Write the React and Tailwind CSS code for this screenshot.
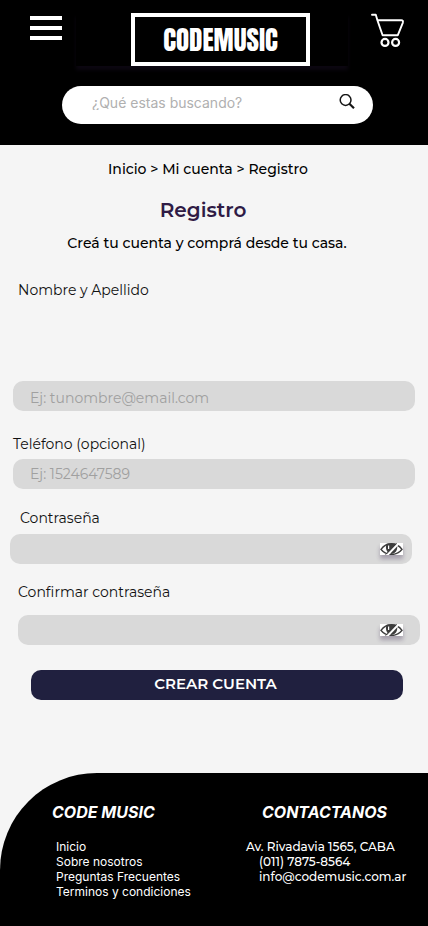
import React from "react";

const field =
  "block h-[30px] w-full rounded-[10px] bg-[#d9d9d9] pl-[17px] pr-12 text-[14px] text-black outline-none placeholder:text-[#a0a0a0]";
const label = "block text-[14px] leading-5 text-[#111111]";

function CartIcon() {
  return (
    <svg viewBox="0 0 34 34" className="h-[34px] w-[34px]" fill="none" stroke="white" strokeWidth="1.9" strokeLinecap="round" strokeLinejoin="round">
      <path d="M1 1.800h3.800l1.600 5.400L11.600 22.200h15.200L31.800 9.800Q32.600 7.200 30.200 7.200H6.400" />
      <circle cx="14" cy="29.400" r="3.500" strokeWidth="2.200" />
      <circle cx="24.600" cy="29.400" r="3.500" strokeWidth="2.200" />
    </svg>
  );
}

function SearchIcon() {
  return (
    <svg viewBox="0 0 16 16" className="h-4 w-4" fill="none" stroke="#151515">
      <circle cx="6.6" cy="6" r="5.4" strokeWidth="1.5" />
      <path d="M10.4 9.800L15 14.200" strokeWidth="2.2" />
    </svg>
  );
}

function EyeOffIcon() {
  return (
    <svg viewBox="0 0 23 12" className="h-3 w-[23px]">
      <rect width="23" height="12" fill="white" />
      <path d="M1 6.400C4.600 1.400 8 .8 11.500 .8s7 .8 10.500 5.600C18.600 10.600 15 11.400 11.500 11.400S4.400 10.600 1 6.400Z" fill="white" stroke="#3d3d3d" strokeWidth="1.500" />
      <path d="M6.600 .8H16.600Q18.200 5 16 8.600Q14.400 11 11.500 11Q8.600 11 7.200 8.600Q5 5 6.600 .8Z" fill="#3d3d3d" />
      <path d="M8.600 2.600V6" stroke="white" strokeWidth="1.200" />
      <path d="M7 12.500L18.500 .5" stroke="white" strokeWidth="2" />
      <path d="M5.600 11.600L16.600 .4" stroke="#3d3d3d" strokeWidth="1" />
    </svg>
  );
}

function PasswordField({ id }) {
  return (
    <div className="relative">
      <input id={id} type="password" className={field} />
      <button
        type="button"
        aria-label="Mostrar contraseña"
        className={
          (id === "password" ? "right-[9px]" : "right-[17px]") +
          " absolute top-[9px] shadow-[0_4px_4px_rgba(47,27,69,0.3)]"
        }
      >
        <EyeOffIcon />
      </button>
    </div>
  );
}

export default function App() {
  return (
    <div className="flex min-h-screen flex-col bg-[#f5f5f5] font-[Montserrat,Inter,sans-serif]">
      <header className="bg-black pb-[21px] pt-[13px]">
        <div className="flex items-start justify-between pl-[30px] pr-[23px]">
          <button type="button" aria-label="Menú" className="mt-[3px] flex w-8 flex-col gap-1.5">
            <span className="h-1 w-full bg-white" />
            <span className="h-1 w-full bg-white" />
            <span className="h-1 w-full bg-white" />
          </button>
          <a href="#inicio" className="mr-[9px] bg-black pl-[55px] pr-[38px] shadow-[0_4px_4px_rgba(47,27,69,0.25)]">
            <span className="flex h-[53px] w-[179px] items-center justify-center border-4 border-white font-[Anton,Roboto,sans-serif] text-[27px] leading-none text-white">
              CODEMUSIC
            </span>
          </a>
          <a href="#carrito" aria-label="Carrito">
            <CartIcon />
          </a>
        </div>
        <form role="search" className="ml-[62px] mr-[55px] mt-5 flex h-[38px] items-start rounded-full bg-white pl-[30px] pr-[18px] pt-2">
          <input
            type="search"
            aria-label="Buscar"
            placeholder="¿Qué estas buscando?"
            className="h-4 min-w-0 flex-1 bg-transparent font-[Inter,sans-serif] text-[14px] outline-none placeholder:text-[#b0b0b0]"
          />
          <button type="submit" aria-label="Buscar">
            <SearchIcon />
          </button>
        </form>
      </header>

      <main className="pt-[14px]">
        <nav aria-label="Ruta" className="pr-3 text-center text-[14px] font-medium leading-5">
          <a href="#inicio">Inicio</a> &gt; <a href="#cuenta">Mi cuenta</a> &gt; <a href="#registro">Registro</a>
        </nav>
        <h1 className="mt-[19px] pr-[22px] text-center text-[20px] font-semibold leading-6 text-[#2f1b45]">Registro</h1>
        <p className="mt-[11px] pr-[14px] text-center text-[14px] font-medium leading-5">Creá tu cuenta y comprá desde tu casa.</p>

        <form className="mt-[27px]">
          <p className={label + " pl-[18px]"}>Nombre y Apellido</p>
          <div className="mt-[81px] px-[13px]">
            <input type="email" aria-label="Email" placeholder="Ej: tunombre@email.com" className={field + " pt-1"} />
          </div>
          <div className="mt-[23px] px-[13px]">
            <label htmlFor="phone" className={label}>Teléfono (opcional)</label>
            <input id="phone" type="tel" placeholder="Ej: 1524647589" className={field + " mt-[5px]"} />
          </div>
          <div className="mt-[19px] pl-[10px] pr-4">
            <label htmlFor="password" className={label + " mb-[6px] pl-[10px]"}>Contraseña</label>
            <PasswordField id="password" />
          </div>
          <div className="mt-[18px] pl-[18px] pr-2">
            <label htmlFor="confirm" className={label + " mb-[13px]"}>Confirmar contraseña</label>
            <PasswordField id="confirm" />
          </div>
          <div className="mt-[25px] pl-[31px] pr-[25px]">
            <button type="submit" className="h-[30px] w-full rounded-[10px] bg-[#20203f] pb-0.5 pr-[3px] text-[15px] font-semibold text-white">
              CREAR CUENTA
            </button>
          </div>
        </form>
      </main>

      <footer className="mt-[73px] flex flex-1 justify-between rounded-tl-[97px] bg-black pb-[26px] pl-[52px] pr-[22px] pt-[29px] text-[12px] leading-[15px] text-white">
        <section className="font-[Inter,sans-serif]">
          <h2 className="text-[16px] font-bold italic leading-5">CODE MUSIC</h2>
          <ul className="mt-[17px] pl-1">
            <li><a href="#inicio">Inicio</a></li>
            <li><a href="#nosotros">Sobre nosotros</a></li>
            <li><a href="#preguntas">Preguntas Frecuentes</a></li>
            <li><a href="#terminos">Terminos y condiciones</a></li>
          </ul>
        </section>
        <section className="w-40">
          <h2 className="pl-4 font-[Inter,sans-serif] text-[16px] font-bold italic leading-5">CONTACTANOS</h2>
          <address className="mt-[17px] font-medium not-italic">
            <p>Av. Rivadavia 1565, CABA</p>
            <p className="pl-[13px]">(011) 7875-8564</p>
            <p className="pl-[13px]"><a href="mailto:info@codemusic.com.ar">info@codemusic.com.ar</a></p>
          </address>
        </section>
      </footer>
    </div>
  );
}
